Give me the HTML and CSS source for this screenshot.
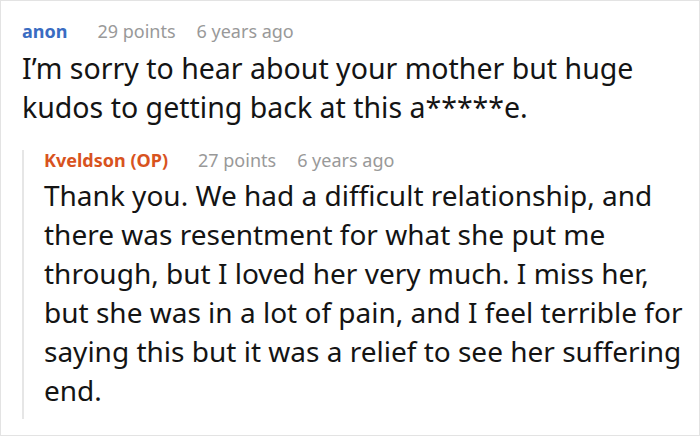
FILE: index.html
```html
<!DOCTYPE html>
<html>
<head>
<meta charset="utf-8">
<link rel="stylesheet" href="styles.css">
</head>
<body>
<div class="frame">
  <div class="comment">
    <div class="meta">
      <span class="author author-blue">anon</span>
      <span class="points">29 points</span>
      <span class="time">6 years ago</span>
    </div>
    <div class="body body-top">I’m sorry to hear about your mother but huge kudos to getting back at this a*****e.</div>
    <div class="reply">
      <div class="meta">
        <span class="author author-op">Kveldson (OP)</span>
        <span class="points">27 points</span>
        <span class="time">6 years ago</span>
      </div>
      <div class="body body-reply">Thank you. We had a difficult relationship, and there was resentment for what she put me through, but I loved her very much. I miss her, but she was in a lot of pain, and I feel terrible for saying this but it was a relief to see her suffering end.</div>
    </div>
  </div>
</div>
</body>
</html>
```
FILE: styles.css
```css
html, body {
  margin: 0;
  padding: 0;
  background: #fff;
}
.frame {
  width: 698px;
  height: 434px;
  border: 1px solid #e3e3e3;
  overflow: hidden;
  font-family: "Noto Sans", sans-serif;
  color: #141414;
}
.comment {
  padding: 20px 0 0 21px;
}
.meta {
  font-size: 18px;
  line-height: 20px;
  color: #999;
  display: flex;
}
.author {
  font-weight: bold;
  margin-right: 30px;
}
.author-blue { color: #3a6cc2; }
.author-op { color: #d8531e; }
.points { margin-right: 21px; }
.body {
  line-height: 39px;
}
.body-top {
  font-size: 28.5px;
  margin-top: 8px;
}
.body-reply {
  font-size: 28px;
  margin-top: 6px;
}
.reply {
  margin-top: 23px;
  border-left: 2px solid #e6e6e6;
  padding: 0 0 9px 20px;
}
```
